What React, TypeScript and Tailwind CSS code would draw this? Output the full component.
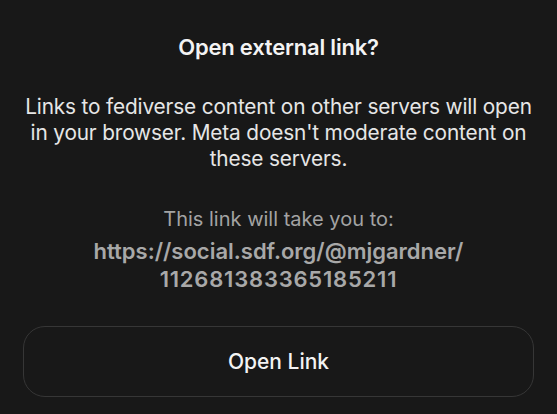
export default function App() {
  return (
    <div className="w-[557px] h-[414px] bg-[#181818] flex flex-col items-center overflow-hidden" style={{ fontFamily: 'Inter, "Noto Sans", sans-serif' }}>
      <div className="mt-[34px] text-[22px] leading-[26px] font-semibold text-[#f3f3f3] tracking-[-0.2px]">Open external link?</div>
      <div className="mt-[34px] text-center text-[20.8px] leading-[26px] text-[#e6e6e6] tracking-[-0.15px] whitespace-nowrap">
        Links to fediverse content on other servers will open
        <br />
        in your browser. Meta doesn't moderate content on
        <br />
        these servers.
      </div>
      <div className="mt-[34px] text-[20px] leading-[26px] text-[#a3a3a3] text-center">This link will take you to:</div>
      <div className="mt-[5px] text-[22px] leading-[28px] font-semibold text-[#a8a8a8] text-center whitespace-nowrap">
        https://social.sdf.org/@mjgardner/
        <br />
        <span className="tracking-[0.8px]">112681383365185211</span>
      </div>
      <button className="mt-[33px] w-[511px] h-[71px] shrink-0 rounded-[22px] border border-[#363636] bg-[#181818] text-[21px] font-medium text-[#f3f3f3]">
        Open Link
      </button>
    </div>
  );
}
